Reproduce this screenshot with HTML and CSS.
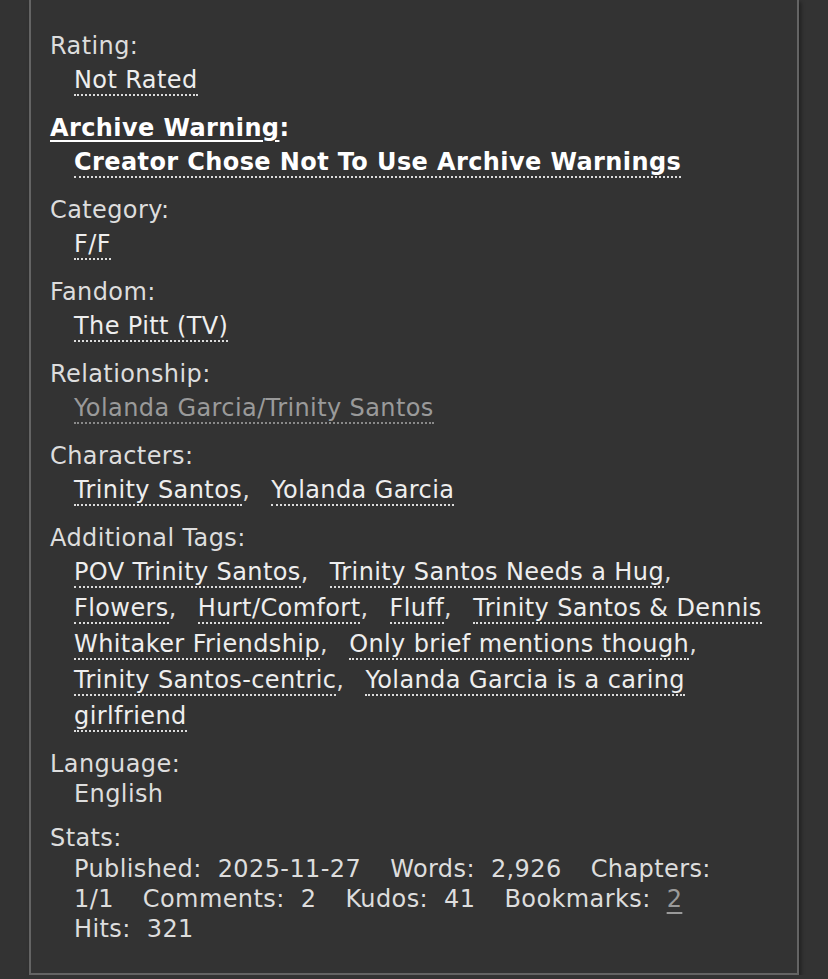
FILE: index.html
```html
<!DOCTYPE html>
<html lang="en">
<head>
<meta charset="utf-8">
<title>Work meta</title>
<link rel="stylesheet" href="styles.css">
</head>
<body>
<div class="wrapper">
  <dl class="work-meta">
    <dt>Rating:</dt>
    <dd class="tags"><ul class="commas"><li><a class="tag" href="#">Not Rated</a></li></ul></dd>

    <dt class="warning"><a href="#" class="plain">Archive Warning</a>:</dt>
    <dd class="tags warning"><ul class="commas"><li><a class="tag" href="#">Creator Chose Not To Use Archive Warnings</a></li></ul></dd>

    <dt>Category:</dt>
    <dd class="tags"><ul class="commas"><li><a class="tag" href="#">F/F</a></li></ul></dd>

    <dt>Fandom:</dt>
    <dd class="tags"><ul class="commas"><li><a class="tag" href="#">The Pitt (TV)</a></li></ul></dd>

    <dt>Relationship:</dt>
    <dd class="tags"><ul class="commas"><li><a class="tag visited" href="#">Yolanda Garcia/Trinity Santos</a></li></ul></dd>

    <dt>Characters:</dt>
    <dd class="tags"><ul class="commas"><li><a class="tag" href="#">Trinity Santos</a></li> <li><a class="tag" href="#">Yolanda Garcia</a></li></ul></dd>

    <dt>Additional Tags:</dt>
    <dd class="tags"><ul class="commas"><li><a class="tag" href="#">POV Trinity Santos</a></li> <li><a class="tag" href="#">Trinity Santos Needs a Hug</a></li> <li><a class="tag" href="#">Flowers</a></li> <li><a class="tag" href="#">Hurt/Comfort</a></li> <li><a class="tag" href="#">Fluff</a></li> <li><a class="tag" href="#">Trinity Santos &amp; Dennis Whitaker Friendship</a></li> <li><a class="tag" href="#">Only brief mentions though</a></li> <li><a class="tag" href="#">Trinity Santos-centric</a></li> <li><a class="tag" href="#">Yolanda Garcia is a caring girlfriend</a></li></ul></dd>

    <dt>Language:</dt>
    <dd class="language">English</dd>

    <dt>Stats:</dt>
    <dd class="stats-wrap">
      <dl class="stats"><dt>Published:</dt> <dd>2025-11-27</dd> <dt>Words:</dt> <dd>2,926</dd> <dt>Chapters:</dt> <dd>1/1</dd> <dt>Comments:</dt> <dd>2</dd> <dt>Kudos:</dt> <dd>41</dd> <dt>Bookmarks:</dt> <dd><a href="#" class="bm">2</a></dd> <dt>Hits:</dt> <dd>321</dd></dl>
    </dd>
  </dl>
</div>
</body>
</html>
```

FILE: styles.css
```css
html, body {
  margin: 0;
  padding: 0;
  background: #333333;
}

body {
  font-family: "DejaVu Sans", Verdana, sans-serif;
  font-size: 24px;
  letter-spacing: 0.4px;
  color: #dddddd;
}

.wrapper {
  margin-left: 29px;
  width: 717px;
  border: 2px solid #646464;
  border-top: 0;
  padding: 30px 30px 29px 19px;
  box-shadow: 2px 2px 4px rgba(0, 0, 0, 0.4);
}

.work-meta {
  margin: 0;
}

.work-meta > dt {
  line-height: 32px;
  margin: 0;
}

.work-meta > dd {
  margin: 0 0 14px 24px;
}

.work-meta > dd.tags {
  line-height: 36px;
}

.work-meta > dd.language {
  line-height: 28px;
}

.work-meta > dd.stats-wrap {
  margin-bottom: 0;
}

.warning {
  font-weight: bold;
  color: #ffffff;
}

a {
  color: #eeeeee;
  text-decoration: none;
}

a.plain {
  color: #ffffff;
  text-decoration: underline;
  text-decoration-thickness: 2px;
  text-underline-offset: 4px;
}

.commas {
  list-style: none;
  margin: 0;
  padding: 0;
  display: inline;
}

.commas li {
  display: inline;
  margin-right: 13px;
}

.commas li::after {
  content: ",";
}

.commas li:last-child::after {
  content: "";
}

a.tag {
  border-bottom: 2px dotted #dcdcdc;
}

.warning a.tag {
  color: #ffffff;
}

a.tag.visited {
  color: #9a9a9a;
  border-bottom-color: #8a8a8a;
}

.stats {
  margin: 0;
  line-height: 30px;
}

.stats dt,
.stats dd {
  display: inline;
  margin: 0;
}

.stats dt {
  margin-right: 8px;
}

.stats dd {
  margin-right: 21px;
}

a.bm {
  color: #9a9a9a;
  text-decoration: underline;
  text-decoration-thickness: 2px;
  text-underline-offset: 5px;
}
```
